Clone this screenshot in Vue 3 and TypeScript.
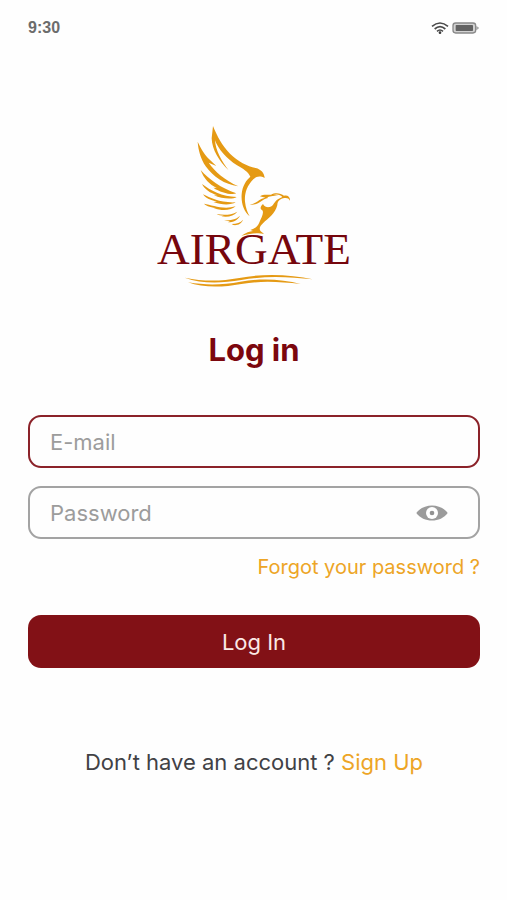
<script setup lang="ts">
import { ref } from 'vue'

const email = ref('')
const password = ref('')
const showPassword = ref(false)
</script>

<template>
  <main class="screen">
    <header class="status">
      <time class="clock">9:30</time>
      <div class="indicators">
        <svg class="wifi" viewBox="0 0 54 36" aria-hidden="true">
          <g fill="none" stroke="#4a4a4a" stroke-width="5">
            <path d="M3 13Q27-7 51 13" />
            <path d="M11 21Q27 7 43 21" />
            <path d="M18 28Q27 20 36 28" />
          </g>
          <circle cx="27" cy="32" r="4" fill="#3c3c3c" />
        </svg>
        <svg class="battery" viewBox="0 0 84 36" aria-hidden="true">
          <rect x="3" y="3" width="68" height="30" rx="8" fill="#d2d2d2" stroke="#898989" stroke-width="4" />
          <rect x="11" y="9" width="52" height="18" rx="2" fill="#626262" />
          <path d="M73 13h3v3h4v4h-4v4h-3z" fill="#999" />
        </svg>
      </div>
    </header>

    <svg class="logo" viewBox="31 30 618 492" role="img" aria-label="Airgate">
      <g fill="#e59a14">
        <path d="M217 33C229 63 244 91 268 116C292 139 320 154 345 159C361 163 371 174 372 189C358 182 347 184 338 193C318 213 311 237 313 260C315 278 320 291 327 304C309 288 301 264 303 238C305 213 317 195 329 185C323 171 307 161 289 151C258 132 232 101 223 76C225 105 241 137 264 166C235 138 214 104 213 70Z" />
        <path d="M171 80C182 103 191 116 201 128L227 153L204 143C224 171 252 195 293 214C251 209 218 185 195 154C180 131 173 106 171 80Z" />
        <path d="M180 165C204 192 242 220 287 235C274 241 239 233 218 218L228 219C207 209 189 191 180 165Z" />
        <path d="M184 207C209 226 244 245 288 246C276 254 244 252 220 241L231 241C208 234 192 223 184 207Z" />
        <path d="M187 238C210 249 238 264 285 262C270 271 242 270 218 261L229 260C208 255 194 249 187 238Z" />
        <path d="M190 266C215 270 247 285 285 274C273 286 246 289 219 280L232 279C213 278 198 274 190 266Z" />
        <path d="M228 297C248 301 270 301 290 290C280 303 261 308 242 304L250 302C240 302 233 301 228 297Z" />
        <path d="M250 317C270 315 286 314 298 302C292 315 278 322 262 322L268 319Z" />
        <path d="M273 327C288 327 300 323 307 314C303 326 290 332 278 330Z" />
        <path d="M327 269C348 266 353 252 374 248L358 244C366 237 379 240 391 239C405 231 421 235 430 242C440 239 449 245 448 257C444 248 436 248 427 250C414 254 411 261 410 270C404 296 383 309 367 325C355 336 354 345 364 352L370 357C354 352 337 355 302 362C317 353 326 349 337 348L329 345C342 341 351 335 355 325C361 309 371 295 365 286C357 281 359 275 367 267C371 277 382 277 387 276C400 274 399 259 413 252L425 246C420 239 409 236 397 240L413 243C394 242 375 245 382 249C362 252 356 272 327 269Z" />
        <path d="M132 488C190 500 239 499 296 489C371 474 453 479 516 493C449 486 378 481 302 495C241 505 184 507 132 488Z" />
        <path d="M142 502C197 511 245 510 299 500C364 489 425 493 480 507C418 501 369 496 302 507C243 518 186 518 142 502Z" />
      </g>
      <path d="M384 254L410 247L399 256C394 267 388 270 377 271C384 263 379 263 372 266Z" fill="#fff" />
      <text class="wordmark" x="340" y="447" text-anchor="middle">AIRGATE</text>
    </svg>

    <h1 class="title">Log in</h1>

    <form class="form" @submit.prevent>
      <label class="field field-active">
        <input v-model="email" type="email" placeholder="E-mail" aria-label="E-mail" autocomplete="email" />
      </label>
      <div class="field">
        <input
          v-model="password"
          :type="showPassword ? 'text' : 'password'"
          placeholder="Password"
          aria-label="Password"
          autocomplete="current-password"
        />
        <button class="reveal" type="button" aria-label="Show password" :aria-pressed="showPassword" @click="showPassword = !showPassword">
          <svg viewBox="0 0 96 48" aria-hidden="true">
            <path d="M1 24C22-6 74-6 95 24C74 54 22 54 1 24Z" fill="#9b9b9b" />
            <circle cx="48" cy="24" r="18" fill="#fff" />
            <circle cx="48" cy="24" r="7" fill="#929292" />
          </svg>
        </button>
      </div>
      <a class="forgot" href="#">Forgot your password ?</a>
      <button class="submit" type="submit">Log In</button>
    </form>

    <p class="signup">Don’t have an account ? <a href="#">Sign Up</a></p>
  </main>
</template>

<style>
body {
  background: #fefefe;
}
</style>

<style scoped>
.screen {
  display: flex;
  flex-direction: column;
  align-items: center;
  padding: 16px 27px 40px 28px;
  font-family: Inter, "Open Sans", sans-serif;
  color: #414145;
}

.status {
  display: flex;
  align-self: stretch;
  align-items: center;
  justify-content: space-between;
  height: 24px;
}

.clock {
  font: 700 16px/24px "Liberation Sans", sans-serif;
  color: #6c6c6c;
}

.indicators {
  display: flex;
  align-items: center;
  gap: 3px;
}

.wifi {
  width: 18px;
  height: 12px;
}

.battery {
  width: 28px;
  height: 12px;
}

.logo {
  width: 206px;
  height: 164px;
  margin-top: 85px;
}

.wordmark {
  font-family: "Liberation Serif", serif;
  font-size: 136px;
  fill: #76060d;
}

.title {
  margin: 41px 0 0;
  font-size: 31px;
  font-weight: 700;
  line-height: 40px;
  color: #7c070e;
}

.form {
  display: flex;
  flex-direction: column;
  align-self: stretch;
  margin-top: 45px;
}

.field {
  display: flex;
  align-items: center;
  box-sizing: border-box;
  height: 53px;
  padding: 0 30px 0 20px;
  border: 2px solid #a3a3a3;
  border-radius: 13px;
}

.field-active {
  margin-bottom: 18px;
  border-color: #8b2229;
}

.field input {
  flex: 1;
  min-width: 0;
  padding: 0;
  border: 0;
  outline: 0;
  background: transparent;
  font: inherit;
  font-size: 22px;
  line-height: 28px;
  color: #414145;
}

.field input::placeholder {
  color: #9c9c9c;
  opacity: 1;
}

.reveal {
  display: flex;
  padding: 0;
  border: 0;
  background: none;
  cursor: pointer;
}

.reveal svg {
  width: 32px;
  height: 16px;
}

.forgot {
  align-self: flex-end;
  margin-top: 16px;
  font-size: 20px;
  line-height: 24px;
  color: #eda526;
  text-decoration: none;
}

.submit {
  height: 53px;
  margin-top: 36px;
  padding: 0;
  border: 0;
  border-radius: 13px;
  background: #821116;
  font: inherit;
  font-size: 22px;
  color: #fbe9e6;
  cursor: pointer;
}

.signup {
  margin: 80px 0 0;
  font-size: 22px;
  line-height: 28px;
}

.signup a {
  color: #eda526;
  text-decoration: none;
}
</style>
